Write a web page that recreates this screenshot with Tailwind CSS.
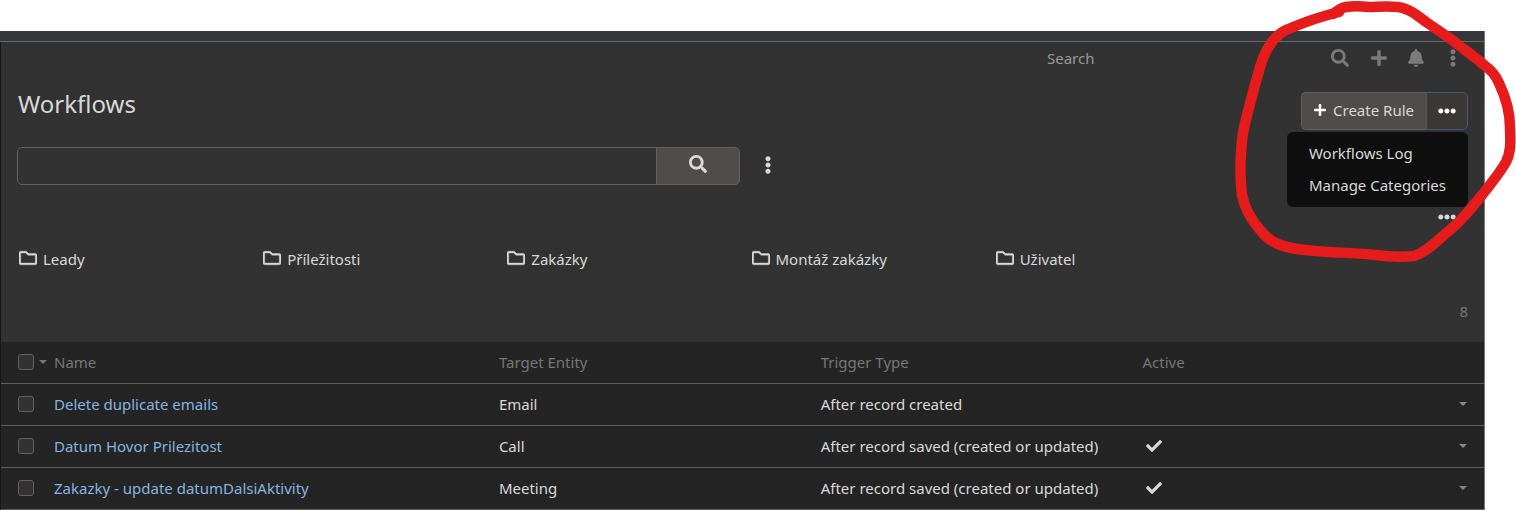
<!DOCTYPE html>
<html lang="en">
<head>
<meta charset="utf-8">
<title>Workflows</title>
<script src="https://cdn.jsdelivr.net/npm/@tailwindcss/browser@4"></script>
</head>
<body class="relative h-screen overflow-hidden bg-white font-['Noto_Sans',sans-serif] text-[15px] leading-6 text-[#d9d9d9]">
<svg class="hidden" aria-hidden="true">
  <symbol id="search" viewBox="0 0 512 512"><path d="M505 442.7L405.3 343c-4.5-4.5-10.6-7-17-7H372c27.6-35.3 44-79.7 44-128C416 93.1 322.9 0 208 0S0 93.1 0 208s93.1 208 208 208c48.3 0 92.7-16.4 128-44v16.3c0 6.4 2.5 12.5 7 17l99.7 99.7c9.4 9.4 24.6 9.4 33.9 0l28.3-28.3c9.4-9.4 9.4-24.6.1-34zM208 336c-70.7 0-128-57.2-128-128 0-70.7 57.2-128 128-128 70.7 0 128 57.2 128 128 0 70.7-57.2 128-128 128z"/></symbol>
  <symbol id="plus" viewBox="0 0 448 512"><path d="M416 208H272V64c0-17.67-14.33-32-32-32h-32c-17.67 0-32 14.33-32 32v144H32c-17.67 0-32 14.33-32 32v32c0 17.67 14.33 32 32 32h144v144c0 17.67 14.33 32 32 32h32c17.67 0 32-14.33 32-32V304h144c17.67 0 32-14.33 32-32v-32c0-17.67-14.33-32-32-32z"/></symbol>
  <symbol id="bell" viewBox="0 0 448 512"><path d="M224 512c35.32 0 63.97-28.65 63.97-64H160.03c0 35.35 28.65 64 63.97 64zm215.39-149.71c-19.32-20.76-55.47-51.99-55.47-154.29 0-77.7-54.48-139.9-127.94-155.16V32c0-17.67-14.32-32-31.98-32s-31.98 14.33-31.98 32v20.84C118.56 68.1 64.08 130.3 64.08 208c0 102.3-36.15 133.53-55.47 154.29-6 6.45-8.66 14.16-8.61 21.71.11 16.4 12.98 32 32.1 32h383.8c19.12 0 32-15.6 32.1-32 .05-7.55-2.61-15.27-8.61-21.71z"/></symbol>
  <symbol id="dots" viewBox="0 0 512 512"><path d="M328 256c0 39.8-32.2 72-72 72s-72-32.2-72-72 32.2-72 72-72 72 32.2 72 72zm104-72c-39.8 0-72 32.2-72 72s32.2 72 72 72 72-32.2 72-72-32.2-72-72-72zm-352 0c-39.8 0-72 32.2-72 72s32.2 72 72 72 72-32.2 72-72-32.2-72-72-72z"/></symbol>
  <symbol id="vdots" viewBox="0 0 192 512"><path d="M96 184c39.8 0 72 32.2 72 72s-32.2 72-72 72-72-32.2-72-72 32.2-72 72-72zM24 80c0 39.8 32.2 72 72 72s72-32.2 72-72S135.8 8 96 8 24 40.2 24 80zm0 352c0 39.8 32.2 72 72 72s72-32.2 72-72-32.2-72-72-72-72 32.2-72 72z"/></symbol>
  <symbol id="folder" viewBox="0 0 512 512"><path stroke="currentColor" stroke-width="12" d="M464 128H272l-54.63-54.63c-6-6-14.14-9.37-22.63-9.37H48C21.49 64 0 85.49 0 112v288c0 26.51 21.49 48 48 48h416c26.51 0 48-21.49 48-48V176c0-26.51-21.49-48-48-48zm0 272H48V112h140.12l54.63 54.63c6 6 14.14 9.37 22.63 9.37H464v224z"/></symbol>
  <symbol id="check" viewBox="0 0 512 512"><path d="M173.898 439.404l-166.4-166.4c-9.997-9.997-9.997-26.206 0-36.204l36.203-36.204c9.997-9.998 26.207-9.998 36.204 0L192 312.69 432.095 72.596c9.997-9.997 26.207-9.997 36.204 0l36.203 36.204c9.997 9.997 9.997 26.206 0 36.204l-294.4 294.401c-9.998 9.997-26.207 9.997-36.204-.001z"/></symbol>
  <symbol id="caret" viewBox="0 0 8 4"><path d="M0 0h8L4 4z"/></symbol>
</svg>

<div class="mt-[31px] mr-[31px] border-r border-[#777]">
  <div class="h-[11px] border-b border-[#686868] bg-[#36373c]"></div>
  <main class="border-l border-[#171717] bg-[#323232]">

    <header class="flex h-8 items-center justify-end pr-[27px] text-[#7b7b7b]">
      <input type="text" aria-label="Search" placeholder="Search" class="mr-7 w-64 bg-transparent outline-none placeholder:text-[#999]">
      <nav class="flex items-center" aria-label="Quick actions">
        <button aria-label="Search" class="mr-[22px] block"><svg class="size-[18px] fill-current"><use href="#search"/></svg></button>
        <button aria-label="Quick create" class="mr-[21px] block"><svg class="h-[18px] w-4 fill-current"><use href="#plus"/></svg></button>
        <button aria-label="Notifications" class="mr-[25px] block"><svg class="h-[18px] w-4 fill-current"><use href="#bell"/></svg></button>
        <button aria-label="Menu" class="block"><svg class="h-[18px] w-2 fill-current"><use href="#vdots"/></svg></button>
      </nav>
    </header>

    <div class="flex items-start justify-between px-4 pt-[18px]">
      <h1 class="pl-px text-2xl leading-6">Workflows</h1>
      <div class="relative flex h-[38px]">
        <button class="flex items-center gap-[7px] rounded-l-[5px] border border-r-0 border-[#676060] bg-[#504c4a] pb-0.5 pr-3 pl-3 whitespace-nowrap"><svg class="h-[14px] w-3 fill-white"><use href="#plus"/></svg>Create Rule</button>
        <button aria-label="More actions" aria-expanded="true" class="flex w-[42px] items-center justify-center rounded-r-[5px] border border-[#435d73] bg-[#3a3735]"><svg class="size-[18px] fill-white"><use href="#dots"/></svg></button>
        <ul class="absolute top-10 right-0 rounded-md bg-[#0f0f0f] pt-[5px] pb-1.5 whitespace-nowrap">
          <li><a href="#log" class="block px-[22px] py-1">Workflows Log</a></li>
          <li><a href="#categories" class="block px-[22px] py-1">Manage Categories</a></li>
        </ul>
      </div>
    </div>

    <form class="mt-[17px] flex items-center px-4">
      <input type="text" aria-label="Filter workflows" class="h-[38px] w-[640px] rounded-l-[5px] border border-[#676060] bg-transparent px-3 outline-none">
      <button type="button" aria-label="Apply search" class="-ml-px flex h-[38px] w-[84px] items-center justify-center rounded-r-[5px] border border-[#676060] bg-[#504c4a] pb-1"><svg class="size-[18px] fill-current"><use href="#search"/></svg></button>
      <button type="button" aria-label="Filter options" class="ml-6 block pb-0.5"><svg class="h-[18px] w-2 fill-current"><use href="#vdots"/></svg></button>
    </form>

    <div class="mt-[23px] flex justify-end pr-7">
      <button aria-label="Category actions" class="block"><svg class="size-[18px] fill-current"><use href="#dots"/></svg></button>
    </div>

    <ul class="mt-[21px] grid grid-cols-6 pl-[18px]">
      <li><a href="#leady" class="flex items-center gap-1.5"><svg class="mb-0.5 size-[18px] fill-current"><use href="#folder"/></svg>Leady</a></li>
      <li><a href="#prilezitosti" class="flex items-center gap-1.5"><svg class="mb-0.5 size-[18px] fill-current"><use href="#folder"/></svg>Příležitosti</a></li>
      <li><a href="#zakazky" class="flex items-center gap-1.5"><svg class="mb-0.5 size-[18px] fill-current"><use href="#folder"/></svg>Zakázky</a></li>
      <li><a href="#montaz" class="flex items-center gap-1.5"><svg class="mb-0.5 size-[18px] fill-current"><use href="#folder"/></svg>Montáž zakázky</a></li>
      <li><a href="#uzivatel" class="flex items-center gap-1.5"><svg class="mb-0.5 size-[18px] fill-current"><use href="#folder"/></svg>Uživatel</a></li>
    </ul>

    <p class="mt-7 pr-4 pb-[19px] text-right text-[#777]">8</p>

    <table class="w-full table-fixed border-collapse bg-[#242424] text-left">
      <colgroup><col class="w-[53px]"><col class="w-[30%]"><col class="w-[21.7%]"><col class="w-[21.7%]"><col><col class="w-14"></colgroup>
      <thead>
        <tr class="h-[41px] border-b border-[#625c5c] text-[#777]">
          <th class="pl-[17px]"><span class="flex items-center gap-[5px]"><input type="checkbox" aria-label="Select all" class="size-4 appearance-none rounded-[3px] border border-[#676060] bg-[#323232]"><button aria-label="Bulk actions" class="block"><svg class="h-1 w-2 fill-current"><use href="#caret"/></svg></button></span></th>
          <th class="font-normal">Name</th><th class="font-normal">Target Entity</th><th class="font-normal">Trigger Type</th><th class="font-normal">Active</th><th></th>
        </tr>
      </thead>
      <tbody>
        <tr class="h-[42px] border-b border-[#625c5c]">
          <td class="pl-[17px]"><input type="checkbox" aria-label="Select Delete duplicate emails" class="block size-4 appearance-none rounded-[3px] border border-[#676060] bg-[#323232]"></td>
          <td><a href="#1" class="text-[#86b4e0]">Delete duplicate emails</a></td><td>Email</td><td class="whitespace-nowrap">After record created</td><td></td>
          <td class="pr-[17px]"><button aria-label="Row actions" class="ml-auto block text-[#888]"><svg class="h-1 w-2 fill-current"><use href="#caret"/></svg></button></td>
        </tr>
        <tr class="h-[42px] border-b border-[#625c5c]">
          <td class="pl-[17px]"><input type="checkbox" aria-label="Select Datum Hovor Prilezitost" class="block size-4 appearance-none rounded-[3px] border border-[#676060] bg-[#323232]"></td>
          <td><a href="#2" class="text-[#86b4e0]">Datum Hovor Prilezitost</a></td><td>Call</td><td class="whitespace-nowrap">After record saved (created or updated)</td>
          <td><svg class="ml-1 size-4 fill-current" role="img" aria-label="Yes"><use href="#check"/></svg></td>
          <td class="pr-[17px]"><button aria-label="Row actions" class="ml-auto block text-[#888]"><svg class="h-1 w-2 fill-current"><use href="#caret"/></svg></button></td>
        </tr>
        <tr class="h-[42px] border-b border-[#625c5c]">
          <td class="pl-[17px]"><input type="checkbox" aria-label="Select Zakazky - update datumDalsiAktivity" class="block size-4 appearance-none rounded-[3px] border border-[#676060] bg-[#323232]"></td>
          <td><a href="#3" class="text-[#86b4e0]">Zakazky - update datumDalsiAktivity</a></td><td>Meeting</td><td class="whitespace-nowrap">After record saved (created or updated)</td>
          <td><svg class="ml-1 size-4 fill-current" role="img" aria-label="Yes"><use href="#check"/></svg></td>
          <td class="pr-[17px]"><button aria-label="Row actions" class="ml-auto block text-[#888]"><svg class="h-1 w-2 fill-current"><use href="#caret"/></svg></button></td>
        </tr>
      </tbody>
    </table>
  </main>
</div>

<!-- Hand-drawn marker ring around the actions menu -->
<svg class="pointer-events-none absolute top-0 right-0 h-[270px] w-[290px]" viewBox="1226 0 290 270" fill="none" stroke="#e61b1b" stroke-width="10.500" stroke-linecap="round" stroke-linejoin="round" aria-hidden="true">
  <path d="M1339 12C1318 17 1300 24 1286 30C1274 36 1265 50 1260 67C1257 79 1254 87 1251 100C1247 116 1244 124 1242 140C1240 160 1240 180 1242 195C1245 210 1251 220 1261 231C1270 243 1284 249 1316 251C1340 253 1357 253 1375 255C1390 257 1405 257 1414 256C1426 252 1436 242 1445 234C1460 223 1473 206 1486 190C1493 181 1501 171 1506 162C1512 150 1510 137 1510 127C1510 114 1506 98 1499 83C1496 76 1490 69 1484 65C1475 57 1466 51 1456 43C1444 34 1435 28 1426 22C1417 15 1408 8 1398 7C1386 6 1377 7 1369 7C1360 6 1352 6 1346 7C1340 8 1337 11 1333 14"/>
</svg>
</body>
</html>
